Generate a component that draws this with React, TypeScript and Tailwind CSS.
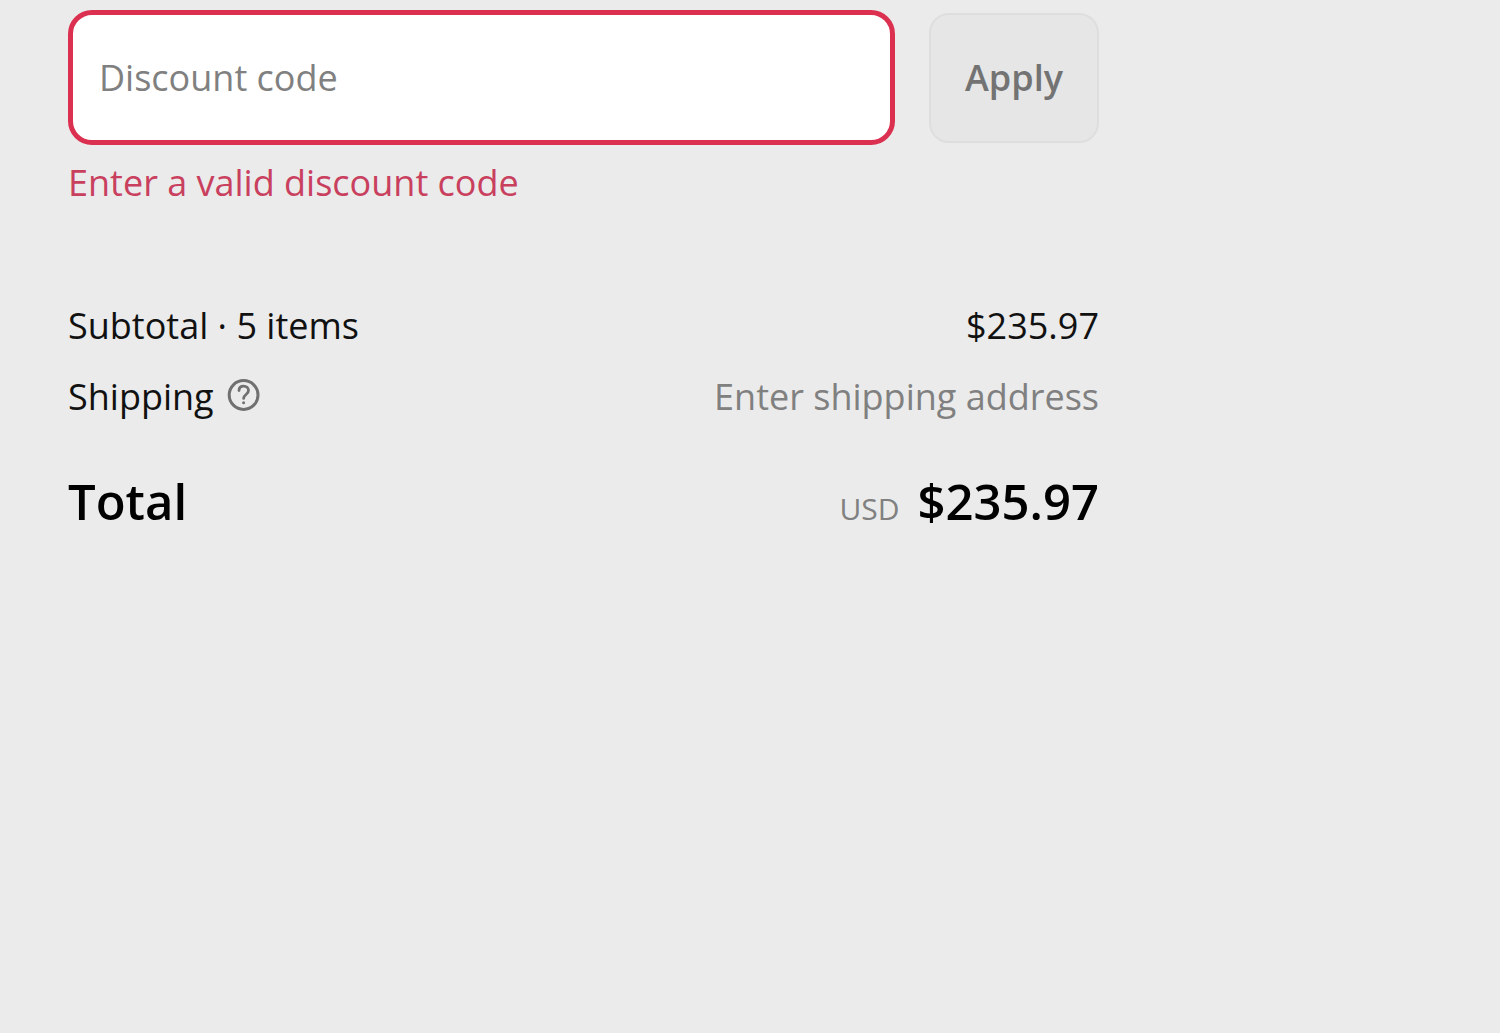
import React from "react";

const QuestionIcon = () => (
  <svg viewBox="0 0 36 36" fill="none" stroke="currentColor" strokeLinecap="round" strokeLinejoin="round" className="size-9">
    <circle cx="17.6" cy="18" r="14.4" strokeWidth="3" />
    <path d="M13 13.6c0-2.8 1.8-4.5 4.6-4.5s4.9 1.8 4.9 4.5c0 4-4.9 3.8-4.9 7.8" strokeWidth="2.8" />
    <circle cx="17.6" cy="25.8" r="1.5" fill="currentColor" stroke="none" />
  </svg>
);

export default function App() {
  return (
    <main className="min-h-screen bg-[#ebebeb] pt-[10px] pl-[68px] pr-[401px] font-['Open_Sans',sans-serif] text-[36px] leading-[50px] text-[#111]">
      <form onSubmit={(e) => e.preventDefault()}>
        <div className="flex items-center gap-[34px]">
          <input
            type="text"
            aria-label="Discount code"
            aria-describedby="discount-error"
            aria-invalid="true"
            placeholder="Discount code"
            className="h-[135px] min-w-0 grow rounded-[24px] border-[5px] border-[#db3050] bg-white px-[26px] outline-none placeholder:text-[#808080]"
          />
          <button type="submit" className="h-[130px] w-[170px] shrink-0 rounded-[20px] border-2 border-[#dedede] bg-[#e6e6e6] font-semibold text-[#737373]">
            Apply
          </button>
        </div>
        <p id="discount-error" className="mt-[13px] text-[#c9405e]">Enter a valid discount code</p>
      </form>
      <dl className="mt-[93px]">
        <div className="flex justify-between">
          <dt>Subtotal · 5 items</dt>
          <dd>$235.97</dd>
        </div>
        <div className="mt-[21px] flex justify-between">
          <dt className="flex items-center gap-3">
            Shipping
            <button type="button" aria-label="Shipping policy" className="pb-1 text-[#707070]">
              <QuestionIcon />
            </button>
          </dt>
          <dd className="text-[#808080]">Enter shipping address</dd>
        </div>
        <div className="mt-[54px] flex items-baseline justify-between text-[49px] font-semibold text-black">
          <dt>Total</dt>
          <dd className="flex items-baseline gap-[18px]">
            <span className="text-[30px] font-normal text-[#808080]">USD</span>
            $235.97
          </dd>
        </div>
      </dl>
    </main>
  );
}
